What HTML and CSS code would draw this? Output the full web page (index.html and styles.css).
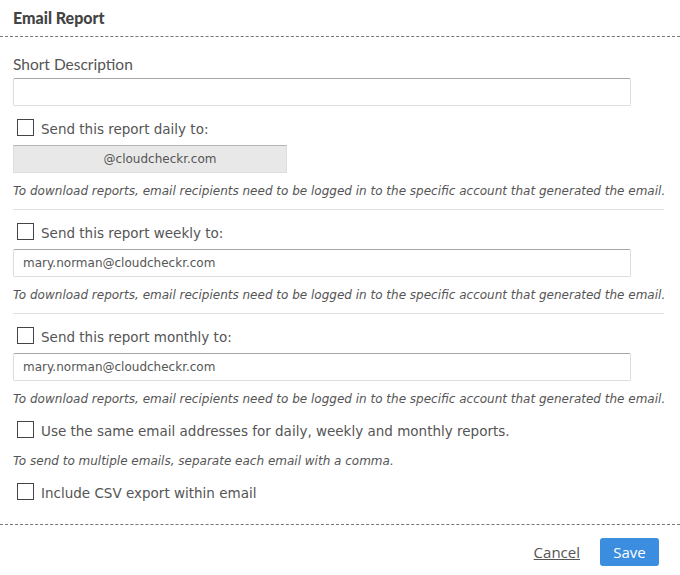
FILE: index.html
```html
<!DOCTYPE html>
<html lang="en">
<head>
    <meta charset="UTF-8">
    <title>Email Report</title>
    <link rel="stylesheet" href="styles.css">
</head>
<body>
<div class="dialog">
    <div class="dialog-header">Email Report</div>

    <div class="dialog-body">
        <div class="field-label">Short Description</div>
        <input class="text-input" type="text">

        <div class="section">
            <label class="check-row"><span class="box"></span><span class="check-text">Send this report daily to:</span></label>
            <div class="domain-input">@cloudcheckr.com</div>
            <p class="note">To download reports, email recipients need to be logged in to the specific account that generated the email.</p>
        </div>

        <div class="section">
            <label class="check-row"><span class="box"></span><span class="check-text">Send this report weekly to:</span></label>
            <input class="text-input" type="text" value="mary.norman@cloudcheckr.com">
            <p class="note">To download reports, email recipients need to be logged in to the specific account that generated the email.</p>
        </div>

        <div class="section last">
            <label class="check-row"><span class="box"></span><span class="check-text">Send this report monthly to:</span></label>
            <input class="text-input" type="text" value="mary.norman@cloudcheckr.com">
            <p class="note">To download reports, email recipients need to be logged in to the specific account that generated the email.</p>
        </div>

        <label class="check-row"><span class="box"></span><span class="check-text">Use the same email addresses for daily, weekly and monthly reports.</span></label>
        <p class="note small">To send to multiple emails, separate each email with a comma.</p>
        <label class="check-row"><span class="box"></span><span class="check-text">Include CSV export within email</span></label>
    </div>

    <div class="dialog-footer">
        <a href="#" class="cancel-link">Cancel</a>
        <button class="save-button">Save</button>
    </div>
</div>
</body>
</html>
```

FILE: styles.css
```css
body {
    margin: 0;
    background: #fff;
    color: #555;
    font-family: "DejaVu Sans", sans-serif;
}
.dialog {
    width: 680px;
}
.dialog-header {
    height: 36px;
    line-height: 36px;
    padding-left: 13px;
    font-family: Lato, sans-serif;
    font-weight: 900;
    font-size: 16px;
    color: #444;
    border-bottom: 1px dashed #777;
}
.dialog-body {
    padding: 17px 16px 0 13px;
    height: 488px;
    box-sizing: border-box;
    border-bottom: 1px dashed #777;
}
.field-label {
    font-family: Lato, sans-serif;
    font-size: 15.5px;
    height: 24px;
    line-height: 20px;
}
.text-input {
    display: block;
    box-sizing: border-box;
    width: 618px;
    height: 28px;
    margin: 0;
    padding: 0 9px;
    border: 1px solid #ddd;
    border-top-color: #a5a5a5;
    border-radius: 2px;
    font-family: inherit;
    font-size: 12px;
    color: #555;
    outline: none;
}
.check-row {
    display: flex;
    align-items: flex-start;
    gap: 7px;
    height: 17px;
    margin: 13px 0 9px 4px;
    font-size: 13.5px;
}
.check-text {
    margin-top: 2px;
    line-height: 17px;
}
.box {
    flex: none;
    width: 15px;
    height: 15px;
    border: 1px solid #444;
    background: #fff;
}
.domain-input {
    box-sizing: border-box;
    width: 274px;
    height: 28px;
    line-height: 27px;
    padding-left: 20px;
    text-align: center;
    font-size: 12px;
    background: #e8e8e8;
    border: 1px solid #ddd;
    border-top-color: #b5b5b5;
}
.note {
    margin: 9px 0 0;
    font-size: 12px;
    font-style: italic;
    line-height: 18px;
    white-space: nowrap;
}
.note.small {
    font-size: 12px;
    margin-top: 14px;
}
.section {
    border-bottom: 1px solid #e0e0e0;
    padding-bottom: 9px;
}
.section.last {
    border-bottom: none;
    padding-bottom: 0;
}
.dialog-footer {
    display: flex;
    justify-content: flex-end;
    align-items: center;
    gap: 20px;
    height: 54px;
    padding-right: 21px;
    font-family: "Open Sans", sans-serif;
}
.cancel-link {
    color: #555;
    font-size: 15px;
    text-decoration: underline;
}
.save-button {
    width: 59px;
    height: 28px;
    border: none;
    border-radius: 3px;
    background: #3b8de0;
    color: #fff;
    font-family: inherit;
    font-size: 15px;
    cursor: pointer;
}
```
